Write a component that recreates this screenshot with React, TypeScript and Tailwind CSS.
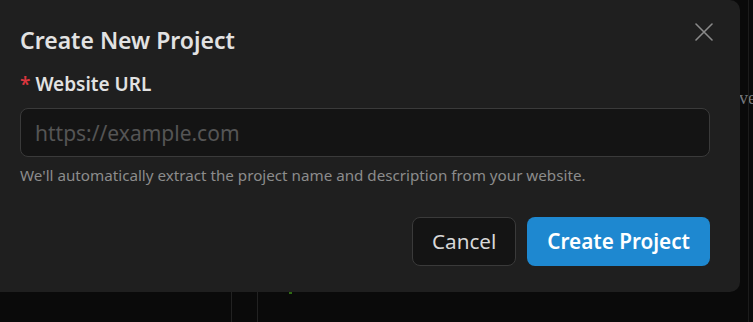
export default function App() {
  return (
    <div className="relative h-[322px] w-[753px] overflow-hidden bg-[#0a0a0a] font-['Noto_Sans',sans-serif]">
      {/* page behind the dialog */}
      <div className="flex h-full">
        <div className="w-[231px]" />
        <div className="w-[26px] border-l border-[#222]" />
        <div className="flex flex-1 flex-col border-l border-[#222] pl-[31px]">
          <div className="-mr-[8px] mt-[88px] self-end font-['Liberation_Serif',serif] text-[18px] leading-[20px] text-[#74777c]">ve</div>
          <div className="mt-[184px] h-[2px] w-[3px] bg-[#2f6b12]" />
        </div>
        <div className="w-[5px] border-l border-[#1c1c1c]" />
      </div>

      {/* dialog */}
      <div className="absolute left-[-10px] top-0 w-[750px] rounded-r-[10px] bg-[#1f1f1f] pb-[26px] pl-[30px] pr-[30px] pt-[24px]">
        <button className="absolute right-[27px] top-[23px] text-[#8a8a8a]">
          <svg width="18" height="18" viewBox="0 0 18 18" fill="none" stroke="currentColor" strokeWidth="1.6" strokeLinecap="round">
            <path d="M1 1L17 17M17 1L1 17" />
          </svg>
        </button>
        <h2 className="text-[23px] font-semibold leading-[32px] text-[#e2e2e2]">Create New Project</h2>
        <div className="mt-[16px] flex items-center text-[19px] font-semibold leading-[24px] text-[#e2e2e2]">
          <span className="mr-[5px] text-[#d9363e]">*</span>
          Website URL
        </div>
        <input
          className="mt-[12px] h-[49px] w-full rounded-[8px] border border-[#3a3a3a] bg-[#141414] px-[14px] text-[21px] text-[#ddd] outline-none placeholder:text-[#555]"
          placeholder="https://example.com"
        />
        <p className="mt-[7px] text-[15.2px] leading-[22px] text-[#8c8c8c]">
          We'll automatically extract the project name and description from your website.
        </p>
        <div className="mt-[31px] flex justify-end gap-[11px]">
          <button className="h-[49px] rounded-[8px] border border-[#3a3a3a] bg-[#141414] px-[19px] text-[20.7px] text-[#d8d8d8]">
            Cancel
          </button>
          <button className="h-[49px] rounded-[8px] bg-[#1e88d0] px-[20px] text-[20.7px] font-semibold text-white">
            Create Project
          </button>
        </div>
      </div>
    </div>
  );
}
